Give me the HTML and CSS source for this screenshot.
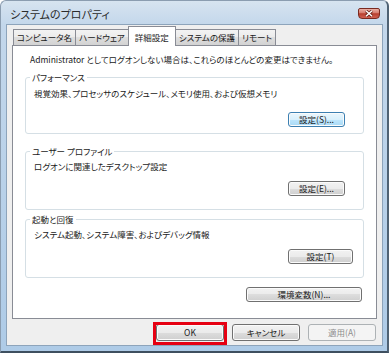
FILE: index.html
```html
<!DOCTYPE html>
<html lang="ja">
<head>
    <meta charset="UTF-8">
    <title>システムのプロパティ</title>
    <link rel="stylesheet" href="styles.css">
</head>
<body>
    <div class="window">
        <div class="titlebar">
            <span class="title">システムのプロパティ</span>
            <button class="close" aria-label="閉じる">
                <svg width="10" height="7" viewBox="0 0 10 7">
                    <path d="M2 0.8 L8 6.2 M8 0.8 L2 6.2" stroke="#6b2218" stroke-width="3"/>
                    <path d="M2 0.8 L8 6.2 M8 0.8 L2 6.2" stroke="#fff" stroke-width="1.5"/>
                </svg>
            </button>
        </div>
        <div class="client">
            <div class="tabs">
                <span class="tab">コンピュータ名</span>
                <span class="tab">ハードウェア</span>
                <span class="tab active">詳細設定</span>
                <span class="tab">システムの保護</span>
                <span class="tab">リモート</span>
            </div>
            <div class="panel">
                <p class="note">Administrator としてログオンしない場合は、これらのほとんどの変更はできません。</p>
                <fieldset class="group perf">
                    <legend>パフォーマンス</legend>
                    <p class="desc">視覚効果、プロセッサのスケジュール、メモリ使用、および仮想メモリ</p>
                    <div class="actions"><button class="btn set focus">設定(S)...</button></div>
                </fieldset>
                <fieldset class="group profile">
                    <legend>ユーザー プロファイル</legend>
                    <p class="desc">ログオンに関連したデスクトップ設定</p>
                    <div class="actions"><button class="btn set">設定(E)...</button></div>
                </fieldset>
                <fieldset class="group startup">
                    <legend>起動と回復</legend>
                    <p class="desc">システム起動、システム障害、およびデバッグ情報</p>
                    <div class="actions"><button class="btn set wide">設定(T)</button></div>
                </fieldset>
                <div class="env-row"><button class="btn env">環境変数(N)...</button></div>
            </div>
            <div class="footer">
                <button class="btn dlg ok">OK</button>
                <button class="btn dlg">キャンセル</button>
                <button class="btn dlg" disabled>適用(A)</button>
            </div>
        </div>
    </div>
</body>
</html>
```

FILE: styles.css
```css
html, body {
    margin: 0;
    padding: 0;
}
body {
    font-family: "Noto Sans CJK JP", "Noto Sans", sans-serif;
    font-size: 8.5px;
    font-feature-settings: "palt";
    color: #1a1a1a;
    background: #fff;
}
.window {
    box-sizing: border-box;
    width: 389px;
    height: 353px;
    border: 1px solid #8b9db0;
    border-right: 2px solid #4f6274;
    border-bottom: 2px solid #3e4f5f;
    border-radius: 6px 6px 0 0;
    background: linear-gradient(#d7e4f0, #c3d7eb 24px, #aecbe7);
    padding: 0 4px 5px 5px;
    display: flex;
    flex-direction: column;
}
.titlebar {
    height: 23px;
    display: flex;
    align-items: flex-start;
    justify-content: space-between;
    padding-top: 7px;
    box-sizing: border-box;
}
.title {
    padding-left: 4px;
    font-size: 11px;
    line-height: 14px;
    color: #2b2b2b;
    margin-top: -1px;
}
.close {
    box-sizing: border-box;
    width: 22px;
    height: 11px;
    margin-right: 3px;
    padding: 0;
    border: 1px solid #7a2a20;
    border-radius: 2px 2px 4px 4px;
    background: linear-gradient(#eab0a5, #d67b6d 45%, #b83e2d 52%, #cf6152);
    display: flex;
    align-items: center;
    justify-content: center;
}
.client {
    box-sizing: border-box;
    height: 322px;
    border: 1px solid #8da4bb;
    background: #efefef;
    padding: 1px 5px 0 5px;
    display: flex;
    flex-direction: column;
}
.tabs {
    display: flex;
    align-items: flex-start;
    height: 20px;
    padding-left: 1px;
    margin-bottom: -1px;
    position: relative;
    z-index: 1;
}
.tab {
    box-sizing: border-box;
    height: 16px;
    margin-top: 3px;
    margin-right: -1px;
    padding: 0 3px;
    border: 1px solid #898c95;
    border-bottom: none;
    background: linear-gradient(#f3f3f3, #ebebeb 50%, #dedede 50%, #d3d3d3);
    line-height: 15px;
    white-space: nowrap;
}
.tab.active {
    height: 20px;
    margin-top: 0;
    padding: 0 6px;
    background: #fff;
    line-height: 20px;
    position: relative;
}
.panel {
    box-sizing: border-box;
    height: 274px;
    background: #fff;
    border: 1px solid #898c95;
    padding: 7px 12px 0;
}
.note {
    margin: 0 0 0 5px;
    line-height: 12px;
    white-space: nowrap;
}
.group {
    margin: 0;
    border: 1px solid #d5dfe5;
    border-radius: 3px;
    padding: 0 10px 13px 8px;
}
.group legend {
    padding: 0 2px;
    margin-left: -4px;
    line-height: 12px;
}
.desc {
    margin: 3px 0 0;
    line-height: 12px;
    white-space: nowrap;
}
.actions {
    display: flex;
    justify-content: flex-end;
    margin-top: 9px;
}
.perf {
    margin-top: 6px;
    padding-bottom: 6px;
}
.perf .desc {
    margin-top: 4px;
}
.perf .actions {
    margin-top: 13px;
}
.profile {
    margin-top: 11px;
}
.startup {
    margin-top: 3px;
}
.btn {
    box-sizing: border-box;
    font: inherit;
    color: #1a1a1a;
    height: 15px;
    padding: 0;
    line-height: 13px;
    border: 1px solid #707070;
    border-radius: 3px;
    background: linear-gradient(#f2f2f2, #ebebeb 50%, #dddddd 50%, #cfcfcf);
    box-shadow: inset 0 0 0 1px #fbfbfb;
}
.btn.focus {
    border-color: #3c7fb1;
    background: linear-gradient(#eaf6fd, #d9f0fc 50%, #bee6fd 50%, #a7d9f5);
}
.btn:disabled {
    color: #8d8d8d;
    border-color: #adb2b5;
    background: #f4f4f4;
    box-shadow: none;
}
.set {
    width: 57px;
    margin-right: 8px;
}
.set.wide {
    width: 65px;
    margin-right: 0;
}
.env-row {
    display: flex;
    justify-content: flex-end;
    margin-top: 9px;
    padding-right: 2px;
}
.env {
    width: 116px;
}
.footer {
    display: flex;
    justify-content: flex-end;
    gap: 8px;
    margin-top: 5px;
    padding-right: 1px;
}
.dlg {
    width: 68px;
    height: 17px;
    line-height: 15px;
}
.ok {
    position: relative;
}
.ok::after {
    content: "";
    position: absolute;
    top: -3px;
    left: -4px;
    right: -4px;
    bottom: -5px;
    border: 3px solid #e60012;
}
```
